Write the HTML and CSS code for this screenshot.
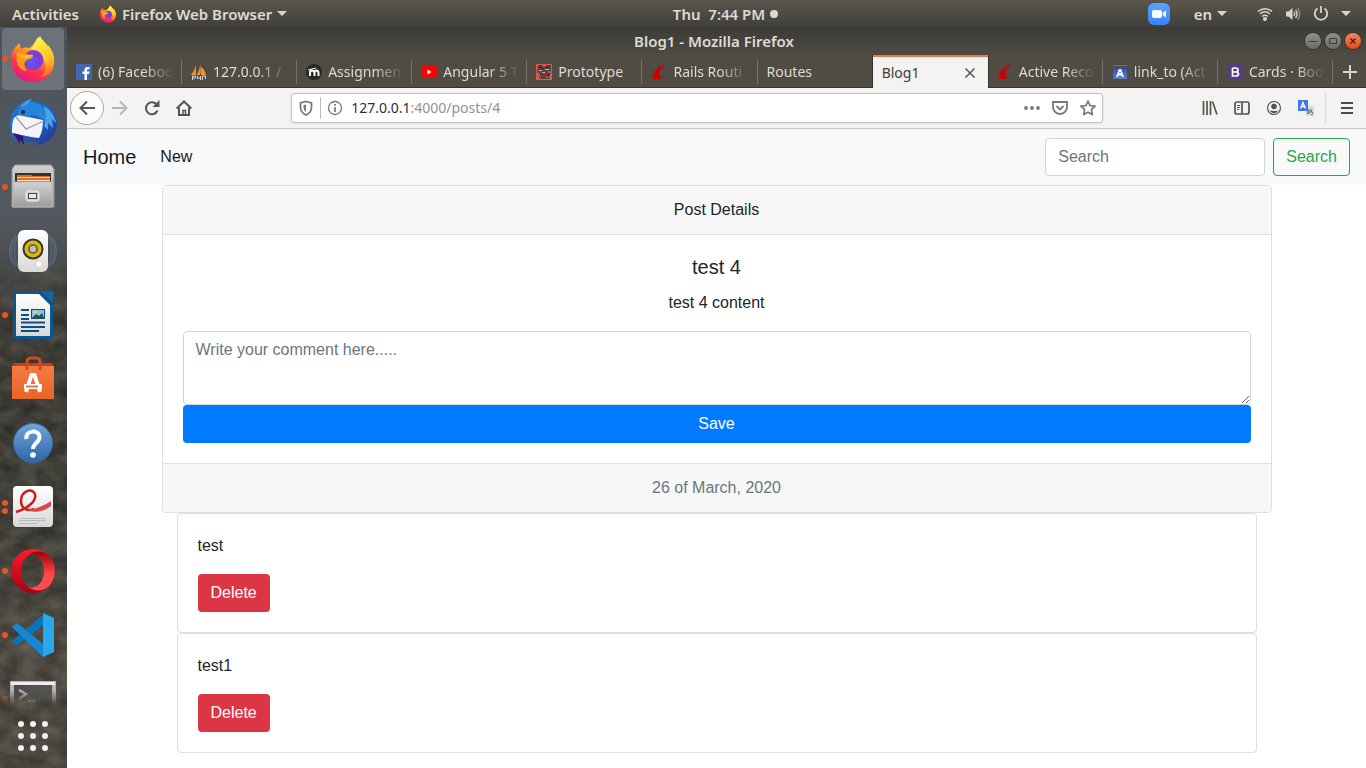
FILE: index.html
```html
<!DOCTYPE html>
<html lang="en">
<head>
<meta charset="utf-8">
<title>Blog1 - Mozilla Firefox</title>
<link rel="stylesheet" href="styles.css">
</head>
<body>
<svg class="defs" width="0" height="0" aria-hidden="true">
  <defs>
    <linearGradient id="fxRing" x1="0.75" y1="0" x2="0.3" y2="1"><stop offset="0.05" stop-color="#fff44f"/><stop offset="0.4" stop-color="#ff9a1f"/><stop offset="0.68" stop-color="#ff3647"/><stop offset="1" stop-color="#e31587"/></linearGradient>
    <linearGradient id="fxTail" x1="0.3" y1="0" x2="0.8" y2="1"><stop offset="0" stop-color="#fff44f"/><stop offset="0.6" stop-color="#ffc52f"/><stop offset="1" stop-color="#ff8a16" stop-opacity="0.3"/></linearGradient>
    <radialGradient id="fxGlobe" cx="0.4" cy="0.6" r="0.7"><stop offset="0" stop-color="#5b5bf0"/><stop offset="0.6" stop-color="#7a3fd8"/><stop offset="1" stop-color="#a92fe0"/></radialGradient>
    <linearGradient id="tb" x1="0" y1="0" x2="1" y2="1"><stop offset="0" stop-color="#1f7fd6"/><stop offset="0.5" stop-color="#1a63c4"/><stop offset="1" stop-color="#2a2f8f"/></linearGradient>
    <linearGradient id="grey" x1="0" y1="0" x2="0" y2="1"><stop offset="0" stop-color="#d2d2d2"/><stop offset="1" stop-color="#9b9b9b"/></linearGradient>
    <linearGradient id="white" x1="0" y1="0" x2="0" y2="1"><stop offset="0" stop-color="#ffffff"/><stop offset="1" stop-color="#d8d8d6"/></linearGradient>
    <linearGradient id="bag" x1="0" y1="0" x2="0" y2="1"><stop offset="0" stop-color="#f37a45"/><stop offset="1" stop-color="#ea6425"/></linearGradient>
    <linearGradient id="help" x1="0" y1="0" x2="0" y2="1"><stop offset="0" stop-color="#6ea6da"/><stop offset="1" stop-color="#2c66a8"/></linearGradient>
    <linearGradient id="opera" x1="0" y1="0" x2="0" y2="1"><stop offset="0" stop-color="#ff1b2d"/><stop offset="1" stop-color="#a70014"/></linearGradient>
    <linearGradient id="operaIn" x1="0" y1="0" x2="0" y2="1"><stop offset="0" stop-color="#9c0000"/><stop offset="0.6" stop-color="#ff4b4b"/></linearGradient>
    <linearGradient id="term" x1="0" y1="0" x2="1" y2="1"><stop offset="0" stop-color="#4c4c4a"/><stop offset="1" stop-color="#5d5d5a"/></linearGradient>
    <linearGradient id="linkTo" x1="0" y1="0" x2="0" y2="1"><stop offset="0" stop-color="#2c4ba8"/><stop offset="1" stop-color="#5f7cd4"/></linearGradient>
    <linearGradient id="zoomApp" x1="0" y1="0" x2="0" y2="1"><stop offset="0" stop-color="#5aa2ff"/><stop offset="1" stop-color="#3a83f7"/></linearGradient>
    <filter id="rock" x="0" y="0" width="1" height="1" color-interpolation-filters="sRGB">
      <feTurbulence type="fractalNoise" baseFrequency="0.05 0.07" numOctaves="5" seed="11"/>
      <feColorMatrix values="0.5 0 0 0 0.01  0.47 0 0 0 0.01  0.43 0 0 0 0  0 0 0 0 0.45"/>
    </filter>
    <symbol id="firefox" viewBox="0 0 48 48">
      <path fill="url(#fxRing)" d="M2 26C1 19 5 12 11 8c0 2 0 4 1 6 2-1 5-2 8-1 3-1 6-6 9-11 2 4 5 7 8 10l2 2c1 0 1-1 1-2 5 6 6 12 5 18-2 10-10 17-21 17C11 47 3 38 2 26Z"/>
      <path fill="url(#fxTail)" d="M22 14C25 10 28 5 31 1c2 4 5 6 8 10v-1c6 7 8 17 4 24-2 5-7 8-12 8 6-4 7-10 5-15-2-6-8-7-14-13Z"/>
      <circle cx="24.500" cy="25" r="10" fill="url(#fxGlobe)"/>
      <path fill="#ff981e" d="M8 17c4-1 9 3 16 3 1 3-3 4-6 5-4 2-3 7 0 11-9 0-12-10-10-19Z"/>
      <path fill="#ffbd25" d="M9 19c5 1 9 1 15 1-2 2-5 3-7 4-3-1-6-2-8-5Z"/>
    </symbol>
    <symbol id="rails" viewBox="0 0 16 16">
      <path fill="#c00" d="M2 15C3 9 6 3 12 2l2 1-3 1C8 6 8 10 10 15Z"/>
      <path stroke="#c00" stroke-width="1.300" stroke-dasharray="1.300 1.500" fill="none" d="M.8 13C2 8 5 2 15 1"/>
    </symbol>
  </defs>
</svg>
<div class="desktop">
  <header class="panel">
    <div class="panel-left">
      <button class="panel-btn">Activities</button>
      <button class="panel-btn"><svg width="18" height="18"><use href="#firefox"/></svg>Firefox Web Browser<i class="caret"></i></button>
    </div>
    <button class="panel-btn clock">Thu&nbsp; 7:44 PM<i class="notice"></i></button>
    <div class="panel-right">
      <svg width="22" height="22" viewBox="0 0 22 22"><rect width="22" height="22" rx="6" fill="url(#zoomApp)"/><rect x="4" y="7" width="10" height="8" rx="2" fill="#fff"/><path fill="#fff" d="m14.700 10 3.300-2.500v7L14.700 12Z"/></svg>
      <button class="panel-btn">en<i class="caret"></i></button>
      <button class="panel-btn status" aria-label="System">
        <svg width="16" height="16" viewBox="0 0 16 16" fill="none" stroke="#d8d5ce" stroke-width="1.500"><path d="M1 5.500C5 1.800 11 1.800 15 5.500M3 8c3-2.600 7-2.600 10 0M5.200 10.500c1.700-1.400 3.900-1.400 5.600 0"/><circle cx="8" cy="13" r="1.300" fill="#d8d5ce"/></svg>
        <svg width="16" height="16" viewBox="0 0 16 16" fill="none" stroke="#d8d5ce" stroke-width="1.400"><path fill="#d8d5ce" stroke="none" d="M1 5.500h2.500L7.500 2v12l-4-3.500H1Z"/><path d="M9 6q1.500 2 0 4M10.600 4q3 4 0 8"/><path stroke="#8b8880" d="M12.500 2q4.500 6 0 12"/></svg>
        <svg width="16" height="16" viewBox="0 0 16 16" fill="none" stroke="#d8d5ce" stroke-width="1.800"><path d="M8 0v7M4.500 2.500a6.200 6.200 0 1 0 7 0"/></svg>
        <i class="caret"></i>
      </button>
    </div>
  </header>

  <div class="workspace">
    <nav class="dock" aria-label="Dock">
      <svg class="rock" width="100%" height="100%"><rect width="100%" height="100%" filter="url(#rock)"/></svg>
      <div class="dock-list">
        <button class="dock-item active" aria-label="Firefox"><i class="dot"></i><svg width="48" height="48"><use href="#firefox"/></svg></button>
        <button class="dock-item" aria-label="Thunderbird"><svg width="48" height="48" viewBox="0 0 48 48"><path fill="url(#tb)" d="M1 23C2 13 8 6 14 3c4-3 8-3 9-3l-2 2c15 0 27 9 27 22 0 13-9 21-22 22l5-4C18 44 8 42 5 41 2 36 0 30 1 23Z"/><path fill="#46a5e8" d="M34 7c7 3 12 9 13 17l-4-4 1 9-5-5 0 7-4-4c2-8 2-14-1-20Z"/><path fill="#f4f4f6" d="m5 19 4-3 25 5c0 7-1 13-4 18C20 38 9 35 3 34c0-6 0-11 2-15Z"/><path fill="none" stroke="#9a9aa4" stroke-width="1.200" d="m7 18 10 12 18-8"/><path fill="#2685d8" d="M9 17c0-8 5-13 14-14 9 1 15 8 13 19-3-3-7-4-10-6l-7 1c-3 0-5-3-8-1Z"/><path fill="#4aa3dc" d="M11 8c4-5 8-7 12-8-5 4-3 6-8 7Z"/><circle cx="14" cy="13" r="2" fill="#23303c"/><path fill="#3c166e" d="m4 34 10 3 1 9-4-5v4Z"/></svg></button>
        <button class="dock-item" aria-label="Files"><i class="dot"></i><svg width="48" height="48" viewBox="0 0 48 48"><path fill="url(#grey)" stroke="#9a9a9a" d="m6 2h36l3 4v38H3V6Z"/><path fill="#35312d" d="M6 10h36v10H6Z"/><path fill="#e9681f" d="M8 12h14l2 1h17v7H8Z"/><path fill="#f4dfce" d="M8 14h33v1H8Zm0 3h33v1H8Z"/><path fill="url(#grey)" stroke="#b8b8b8" d="M4 19h39v25H4Z"/><rect x="17" y="28" width="13" height="10" rx="2" fill="#cfcfcf" stroke="#eee"/><rect x="19.500" y="30.500" width="8" height="5" fill="#e8e8e8" stroke="#444"/></svg></button>
        <button class="dock-item" aria-label="Rhythmbox"><svg width="48" height="48" viewBox="0 0 48 48"><path fill="none" stroke="#6288ab" stroke-opacity="0.400" stroke-width="1.500" d="M7 9q-9 15 0 30M4 12q-7 12 0 24M10 6q-9 17 0 36M41 9q9 15 0 30M44 12q7 12 0 24M38 6q9 17 0 36"/><rect x="9" y="3" width="30" height="42" rx="6" fill="url(#white)"/><circle cx="24" cy="22" r="10.500" fill="#34352f"/><circle cx="24" cy="22" r="8.500" fill="#d9b811"/><circle cx="24" cy="22" r="5" fill="#76640e"/><circle cx="24" cy="22" r="3.200" fill="#b9bfce"/><circle cx="30" cy="37" r="3.500" fill="#fff" stroke="#ccc"/></svg></button>
        <button class="dock-item" aria-label="LibreOffice Writer"><i class="dot"></i><svg width="48" height="48" viewBox="0 0 48 48"><path fill="#0b5591" d="M6 0h26l12 12v33a3 3 0 0 1-3 3H7a3 3 0 0 1-3-3V2a2 2 0 0 1 2-2Z"/><path fill="#0c67a8" d="M32 0h12v12Z"/><path fill="url(#white)" d="M7 3h23l11 11v31H7Z"/><path stroke="#0b4f82" stroke-width="2" d="M12 19h8m-8 5h8m-8 4h8m-8 3.500h24M12 36h24m-24 4h18"/><rect x="22.500" y="18.500" width="13" height="9" fill="#86c4ef" stroke="#0b4f82"/><path fill="#3d4a2e" d="m23 27 4-4 3 2 3-3 2 5Z"/><circle cx="26" cy="21" r="1.500" fill="#ffd84a"/></svg></button>
        <button class="dock-item" aria-label="Ubuntu Software"><svg width="48" height="48" viewBox="0 0 48 48"><path fill="#bb431b" d="m5 8-2 4h42l-2-4Z"/><path fill="url(#bag)" d="M3 11h42v33H3Z"/><path fill="none" stroke="#cf4d1d" stroke-width="3" d="M18 15V7q0-4 4-4h5q4 0 4 4v8"/><path fill="none" stroke="#fff" stroke-width="4" d="m17 37 5.500-17h3L31 37"/><path fill="#fff" d="M15 29h18v5H15Z"/><path stroke="#ee6f37" stroke-width="2" d="M17 31.500h12"/></svg></button>
        <button class="dock-item" aria-label="Help"><svg width="48" height="48" viewBox="0 0 48 48"><circle cx="24" cy="24" r="19.500" fill="url(#help)" stroke="#3a6ea6"/><path fill="none" stroke="#fff" stroke-width="4" d="M17.500 20c-2-9 13-10 13-2 0 6-6.500 6-6.500 12"/><circle cx="24" cy="36" r="2.800" fill="#fff"/></svg></button>
        <button class="dock-item" aria-label="Document Viewer"><i class="dot upper"></i><i class="dot lower"></i><svg width="48" height="48" viewBox="0 0 48 48"><rect x="4" y="3" width="40" height="41" rx="4" fill="url(#white)"/><path fill="none" stroke="#d31820" stroke-width="2.500" d="M7 29c11-3 21-11 19-18-3-7-14-3-14 7 0 7 6 11 13 8"/><path fill="#e0454a" d="M18 26c8 1 16-3 24-8v5c-8 6-17 8-24 3Z"/><path stroke="#bbb" d="M10 35.500h27m-27 2h27m-27 3h18"/></svg></button>
        <button class="dock-item" aria-label="Opera"><i class="dot"></i><svg width="48" height="48" viewBox="0 0 48 48"><path fill="url(#opera)" fill-rule="evenodd" d="M24 2a22 22 0 1 0 0 44 22 22 0 0 0 0-44ZM24 7c7 0 11 8 11 17s-4 17-11 17-12-8-12-17S17 7 24 7Z"/><path fill="url(#operaIn)" d="M19 8C26 3 34 4 39 8c9 8 9 24 0 32-5 4-13 5-20 0 9 3 16-5 16-16S28 5 19 8Z"/></svg></button>
        <button class="dock-item" aria-label="Visual Studio Code"><i class="dot"></i><svg width="48" height="48" viewBox="0 0 48 48"><path fill="#0875bd" d="m3 30 5 4 27-20V3L3 30Z"/><path fill="#1588d1" d="m8 12-5 4 31 30V33Z"/><path fill="#29a8f2" d="m34 2 11 5v34l-11 5Z"/></svg></button>
        <button class="dock-item" aria-label="Terminal"><i class="dot"></i><svg width="48" height="48" viewBox="0 0 48 48"><path fill="#b4b4b2" d="M1 6h46v42H1Z"/><path fill="#eee" d="M2 7h44v3H2Z"/><path fill="url(#term)" d="M5 10h38v38H5Z"/><path fill="none" stroke="#bdbdbb" stroke-width="2.500" d="m10 15 7 4-7 5m9 2h8"/></svg></button>
      </div>
      <button class="apps" aria-label="Show Applications"><svg width="32" height="32" viewBox="0 0 32 32" fill="#f1f1ef"><circle cx="4" cy="4" r="3"/><circle cx="16" cy="4" r="3"/><circle cx="28" cy="4" r="3"/><circle cx="4" cy="16" r="3"/><circle cx="16" cy="16" r="3"/><circle cx="28" cy="16" r="3"/><circle cx="4" cy="28" r="3"/><circle cx="16" cy="28" r="3"/><circle cx="28" cy="28" r="3"/></svg></button>
    </nav>

    <section class="window">
      <div class="titlebar">
        <span class="window-title">Blog1 - Mozilla Firefox</span>
        <div class="controls">
          <button aria-label="Minimize"><svg width="16" height="16" stroke="#3d3b35"><path d="M4 8.500h8"/></svg></button>
          <button aria-label="Maximize"><svg width="16" height="16" fill="none" stroke="#3d3b35"><path d="M4.500 5.500h7v5h-7Z"/></svg></button>
          <button class="close" aria-label="Close"><svg width="16" height="16" stroke="#4b1e0c" stroke-width="1.300"><path d="m5.500 5.500 5 5m0-5-5 5"/></svg></button>
        </div>
      </div>
      <div class="tabstrip">
        <div class="tabs">
          <button class="tab"><svg width="16" height="16" viewBox="0 0 16 16"><rect width="16" height="16" fill="#4267b2"/><path fill="#fff" d="M8.500 16v-6H6.500V7.500h2V6q0-3 3-3H13.500v2.300H12q-1 0-1 1v1.200h2.500L13 10h-2v6Z"/></svg><span>(6) Faceboo</span></button>
          <button class="tab"><svg width="16" height="16" viewBox="0 0 16 16"><path fill="#f0932b" d="M5 1v10H0Q4 6 5 1Zm4-1c1 4 1 8 0 11H5.500Q9 6 9 0Zm1 3c4 3 4 5 5 8h-5Z"/><path stroke="#d4d4e4" fill="none" d="M1.500 16v-4h3v2h-3m5 2v-4m0 2h3m0-2v4m2 0v-4h3v4"/><path stroke="#4b4b83" d="M0 15.500h16" stroke-dasharray="1 1"/></svg><span>127.0.0.1 /</span></button>
          <button class="tab"><svg width="16" height="16" viewBox="0 0 16 16"><circle cx="8" cy="8" r="8" fill="#282828"/><path fill="none" stroke="#fff" stroke-width="2" d="M4 12V7m0 2q0-2.500 2-2.500T8.500 9v3m0-3q0-2.500 2-2.500t2 2.500v3"/><path stroke="#fff" d="m2 6 8-2"/></svg><span>Assignmen</span></button>
          <button class="tab"><svg width="16" height="16" viewBox="0 0 16 16"><rect y="2" width="16" height="12" rx="3" fill="#f00"/><path fill="#fff" d="m6.500 5.500 4 2.500-4 2.500Z"/></svg><span>Angular 5 T</span></button>
          <button class="tab plain"><svg width="16" height="16" viewBox="0 0 16 16"><rect width="16" height="16" fill="#ef5140"/><path fill="#5c4541" d="M2 1h4l2 2 3-2h4v6l-2 8H4L1 8Z"/><path fill="#c6aaa2" d="M3 6h3v1H3Zm6-1h4v1H9ZM6 8h3v1H6Z"/><path fill="#a52520" d="M6 9h6v3H6Z"/><path stroke="#292522" stroke-width="1.200" d="m3 3 4 2m2-1 4-1m-9 7 2 3m5 0 2-4"/><path stroke="#b99a94" d="m2 9 3 4m5 0h2m0-5h2"/></svg><span>Prototype</span></button>
          <button class="tab"><svg width="16" height="16"><use href="#rails"/></svg><span>Rails Routi</span></button>
          <button class="tab plain last"><span>Routes</span></button>
          <div class="tab plain current"><span>Blog1</span><button class="tab-close" aria-label="Close tab"><svg width="12" height="12" stroke="#55554f" stroke-width="1.500"><path d="m1.500 1.500 9 9m0-9-9 9"/></svg></button></div>
          <button class="tab"><svg width="16" height="16"><use href="#rails"/></svg><span>Active Reco</span></button>
          <button class="tab"><svg width="16" height="16" viewBox="0 0 16 16"><path fill="#5478cb" d="M1 1h14v1H1Z"/><path fill="url(#linkTo)" d="M1 3h14v12H1Z"/><path fill="none" stroke="#fff" stroke-width="1.800" d="m5 13 2.500-7h1l2.500 7M6 10.500h4"/></svg><span>link_to (Act</span></button>
          <button class="tab"><svg width="16" height="16" viewBox="0 0 16 16"><rect width="16" height="16" rx="3" fill="#563d7c"/><path fill="none" stroke="#fff" stroke-width="1.700" d="M5.500 4h3q2.500 0 2.500 2T8.500 8h-3m3 0q3 0 3 2t-3 2h-3V4"/></svg><span>Cards · Boo</span></button>
        </div>
        <button class="new-tab" aria-label="New tab"><svg width="14" height="14" stroke="#d8d5ce" stroke-width="2"><path d="M7 0v14M0 7h14"/></svg></button>
      </div>
      <div class="toolbar">
        <button class="tool back" aria-label="Back"><svg width="16" height="16" fill="none" stroke="#55554f" stroke-width="2"><path d="M16 8H1.500M8 1.500 1.500 8 8 14.500"/></svg></button>
        <button class="tool" aria-label="Forward"><svg width="16" height="16" fill="none" stroke="#b5b5b2" stroke-width="2"><path d="M0 8h14.500M8 1.500 14.500 8 8 14.500"/></svg></button>
        <button class="tool" aria-label="Reload"><svg width="16" height="16" fill="none" stroke="#55554f" stroke-width="2"><path d="M13.500 10.500A6 6 0 1 1 13 5"/><path fill="#55554f" stroke="none" d="M15.500 0v7h-7Z"/></svg></button>
        <button class="tool" aria-label="Home"><svg width="16" height="16" fill="none" stroke="#55554f" stroke-width="2"><path d="m.700 8.500 7.300-7 7.300 7M3 7.500V15h10V7.500"/><path stroke-width="1.500" d="M7 15v-4.500h2.500V15"/></svg></button>
        <div class="spring"></div>
        <div class="urlbar">
          <svg width="16" height="16" fill="none" stroke="#77777a" stroke-width="1.700"><path d="M8 1.500 13.500 3v4.500q0 5-5.500 7.500-5.500-2.500-5.500-7.500V3Z"/><path fill="#77777a" stroke="none" d="M8 4.500v7.500q-2.500-1.500-2.500-4.500V5Z"/></svg>
          <i class="url-sep"></i>
          <svg width="16" height="16" fill="none" stroke="#77777a" stroke-width="1.300"><circle cx="8" cy="8" r="6.500"/><path stroke-width="1.700" d="M8 7v5M8 4v1.700"/></svg>
          <a class="url" href="#post"><b>127.0.0.1</b>:4000/posts/4</a>
          <svg width="16" height="16" fill="#77777a"><circle cx="2" cy="8" r="1.900"/><circle cx="8" cy="8" r="1.900"/><circle cx="14" cy="8" r="1.900"/></svg>
          <svg width="16" height="16" fill="none" stroke="#77777a" stroke-width="1.800"><path d="M1 2h14v5a7 7 0 0 1-14 0Z"/><path d="m4.500 6 3.500 3.500L11.500 6"/></svg>
          <svg width="16" height="16" fill="none" stroke="#77777a" stroke-width="1.700" stroke-linejoin="round"><path d="m8 1 2.100 4.600 5 .6-3.700 3.400 1 5L8 12.200l-4.400 2.400 1-5L.900 6.200l5-.6Z"/></svg>
        </div>
        <div class="spring"></div>
        <button class="tool" aria-label="Library"><svg width="16" height="16" fill="none" stroke="#55554f" stroke-width="1.700"><path d="M1.500 1v14M5 1v14M8.500 1v14M10.500 1.500l4.500 13"/></svg></button>
        <button class="tool" aria-label="Sidebar"><svg width="16" height="16" fill="none" stroke="#55554f" stroke-width="1.700"><rect x="1" y="2" width="14" height="12" rx="2"/><path d="M8 2v12"/><path stroke-width="1" d="M3 5.500h3m-3 2h3m-3 2h2"/></svg></button>
        <button class="tool" aria-label="Account"><svg width="16" height="16" fill="none" stroke="#55554f"><circle cx="8" cy="8" r="6.500" stroke-width="1.200"/><circle cx="8" cy="6.500" r="2.400" fill="#55554f"/><path fill="#55554f" stroke="none" d="M3.500 10.500q4.500 1 9 0Q8 16 3.500 10.500Z"/></svg></button>
        <button class="tool" aria-label="Translate"><svg width="16" height="16" fill="none"><path fill="#d9dcdf" d="M7 6h9v10H8Z"/><path fill="#4374e8" d="M0 0h10v11H0Z"/><path stroke="#fff" stroke-width="1.400" d="m2.500 8.500 2.500-6 2.500 6m-4-2h3"/><path stroke="#577e91" d="M8 10h6m-4-1q-1 5 1 5m3-4q-1 4-5 3 2-3 5-1t-1 3"/></svg></button>
        <i class="tool-sep"></i>
        <button class="tool" aria-label="Menu"><svg width="12" height="14" stroke="#4b4b46" stroke-width="2"><path d="M0 2h12M0 7h12M0 12h12"/></svg></button>
      </div>

      <div class="page">
        <nav class="navbar">
          <a class="brand" href="#home">Home</a>
          <a class="nav-link" href="#new">New</a>
          <form class="search">
            <input class="field" type="search" placeholder="Search" aria-label="Search">
            <button class="btn outline" type="button">Search</button>
          </form>
        </nav>
        <main class="container">
          <article class="card post" id="post">
            <div class="card-header">Post Details</div>
            <div class="card-body">
              <h5 class="post-title">test 4</h5>
              <p class="card-text">test 4 content</p>
              <form>
                <textarea class="field comment-box" placeholder="Write your comment here....." aria-label="Comment"></textarea>
                <button class="btn primary" type="button">Save</button>
              </form>
            </div>
            <div class="card-footer">26 of March, 2020</div>
          </article>
          <div class="comments">
            <article class="card"><div class="card-body"><p class="card-text">test</p><button class="btn danger">Delete</button></div></article>
            <article class="card"><div class="card-body"><p class="card-text">test1</p><button class="btn danger">Delete</button></div></article>
          </div>
        </main>
      </div>
    </section>
  </div>
</div>
</body>
</html>
```
FILE: styles.css
```css
*, *::before, *::after { box-sizing: border-box; }
body { margin: 0; font: 14px/20px "Noto Sans", sans-serif; color: #dfdbd2; }
button { font: inherit; color: inherit; background: none; border: 0; padding: 0; margin: 0; }
svg { display: block; flex: none; }
.defs { position: absolute; }
.desktop { display: flex; flex-direction: column; height: 100vh; overflow: hidden; }

/* Top panel */
.panel { display: grid; grid-template-columns: minmax(0, 15fr) auto minmax(0, 13fr); align-items: center; height: 27px; flex: none; padding: 0 15px 0 12px; font-size: 15px; background: linear-gradient(#5a564d, #403f3a); }
.panel-left, .panel-right { display: flex; align-items: center; }
.panel-left { gap: 20px; }
.panel-right { justify-content: flex-end; gap: 24px; }
.panel-btn { display: flex; align-items: center; gap: 5px; font-weight: 600; white-space: nowrap; }
.caret { border: 5px solid transparent; border-top-color: #d8d5ce; border-bottom: 0; }
.notice { width: 8px; height: 8px; border-radius: 50%; background: #dcd9d2; }
.status { gap: 12px; margin-left: 6px; }

.workspace { display: flex; flex: 1; min-height: 0; }

/* Dock */
.dock { position: relative; display: flex; flex-direction: column; flex: none; width: 67px; background: linear-gradient(#4c535c 0, #525960 25%, #4b4c4b 33%, #3c3c38 42%, #3e3f3a 65%, #5a554d 85%, #524d46); }
.rock { position: absolute; inset: 0; mask-image: linear-gradient(transparent 30%, #000 38%); }
.dock-list { position: relative; flex: 1; min-height: 0; overflow: hidden; mask-image: linear-gradient(#000 calc(100% - 14px), transparent); }
.dock-item { position: relative; display: flex; align-items: center; justify-content: center; width: 100%; height: 64px; padding-right: 1px; }
.dock-item.active::before { content: ""; position: absolute; inset: 1px 3px 1px 2px; border-radius: 4px; background: rgba(255, 255, 255, 0.18); }
.dock-item svg { position: relative; }
.dot { position: absolute; left: 2px; top: 29px; width: 6px; height: 6px; border-radius: 50%; background: #e95420; }
.dot.upper { top: 25px; }
.dot.lower { top: 33px; }
.apps { position: relative; display: flex; align-items: center; justify-content: center; flex: none; height: 64px; padding-right: 1px; }

/* Window frame */
.window { display: flex; flex-direction: column; flex: 1; min-width: 0; background: #fff; }
.titlebar { display: grid; grid-template-columns: 1fr auto 1fr; align-items: center; height: 28px; flex: none; padding-right: 5px; background: linear-gradient(#3c3b37, #4e4b44); }
.window-title { grid-column: 2; font-size: 15px; font-weight: 600; }
.controls { display: flex; gap: 4px; justify-content: flex-end; }
.controls button { width: 16px; height: 16px; border-radius: 50%; background: linear-gradient(#92908a, #6d6b65); box-shadow: 0 0 0 1px #35342f; }
.controls .close { background: linear-gradient(#f58563, #df4b1b); }
.tabstrip { display: flex; height: 33px; flex: none; background: #504c44; box-shadow: inset 0 -1px #34332e; }
.tabs { display: grid; grid-template-columns: repeat(11, 1fr); flex: 1; min-width: 0; }
.tab { position: relative; display: flex; align-items: center; gap: 6px; min-width: 0; padding: 0 2px 0 9px; text-align: left; }
.tab::after { content: ""; position: absolute; right: 0; top: 5px; bottom: 4px; width: 1px; background: #77746c; }
.tab.last::after, .tab.current::after, .tab.current + .tab::before { display: none; }
.tab span { flex: 1; min-width: 0; overflow: hidden; white-space: nowrap; mask-image: linear-gradient(90deg, #000 46px, transparent 76px); }
.tab.plain span { mask-image: none; }
.tab.current { color: #3d3c38; background: #f4f3f2; border-top: 2px solid #f07746; box-shadow: -1px 0 #34332e, 1px 0 #34332e; }
.tab-close { margin-right: 10px; }
.new-tab { display: flex; align-items: center; justify-content: center; width: 33px; }

/* Navigation toolbar */
.toolbar { display: flex; align-items: center; height: 41px; flex: none; padding: 0 3px; background: #f4f3f2; border-bottom: 1px solid #c8c6c4; }
.tool { display: flex; align-items: center; justify-content: center; width: 32px; height: 32px; }
.tool.back { width: 34px; height: 34px; border: 1px solid #aaa9a6; border-radius: 50%; background: #fcfcfb; }
.spring { flex: 4; }
.urlbar { display: flex; align-items: center; flex: 35; min-width: 0; gap: 12px; height: 30px; padding: 0 6px; background: #fff; border: 1px solid #c4c2c0; border-radius: 3px; box-shadow: 0 1px 3px rgba(0, 0, 0, 0.08); }
.url-sep { width: 1px; height: 22px; margin: 0 -6px; background: #bbb; }
.url { flex: 1; margin-left: -4px; color: #929292; text-decoration: none; white-space: nowrap; }
.url b { font-weight: 400; color: #2e2e2e; }
.tool-sep { width: 1px; height: 32px; margin: 0 5px 0 3px; background: #dcdad8; }

/* Blog page */
.page { flex: 1; min-height: 0; overflow: hidden; font: 16px/24px "Liberation Sans", Arial, sans-serif; color: #212529; }
.navbar { display: flex; align-items: center; padding: 9px 16px; background: #f8f9fa; }
.navbar a { color: #17191c; text-decoration: none; }
.brand { margin-right: 24px; font-size: 20px; }
.search { display: flex; gap: 8px; margin-left: auto; }
.field { display: block; padding: 6px 12px; font: inherit; color: #495057; background: #fff; border: 1px solid #ced4da; border-radius: 4px; }
.field::placeholder { color: #6c757d; }
.search .field { width: 220px; height: 38px; appearance: none; }
.btn { padding: 6px 12px; border: 1px solid transparent; border-radius: 4px; }
.outline { color: #28a745; border-color: #28a745; }
.primary { display: block; width: 100%; color: #fff; background: #007bff; }
.danger { color: #fff; background: #dc3545; }
.container { max-width: 1110px; margin: 0 auto; }
.card { border: 1px solid #dfdfdf; border-radius: 4px; background: #fff; overflow: hidden; }
.post { text-align: center; }
.card-header, .card-footer { padding: 12px 20px; background: #f7f7f7; }
.card-header { border-bottom: 1px solid #dfdfdf; }
.card-footer { color: #6c757d; border-top: 1px solid #dfdfdf; }
.card-body { padding: 20px; }
.post-title { margin: 0 0 12px; font-size: 20px; font-weight: 400; line-height: 24px; }
.card-text { margin: 0 0 16px; }
.comment-box { width: 100%; height: 74px; resize: vertical; }
.comments { padding: 0 15px; }
```
